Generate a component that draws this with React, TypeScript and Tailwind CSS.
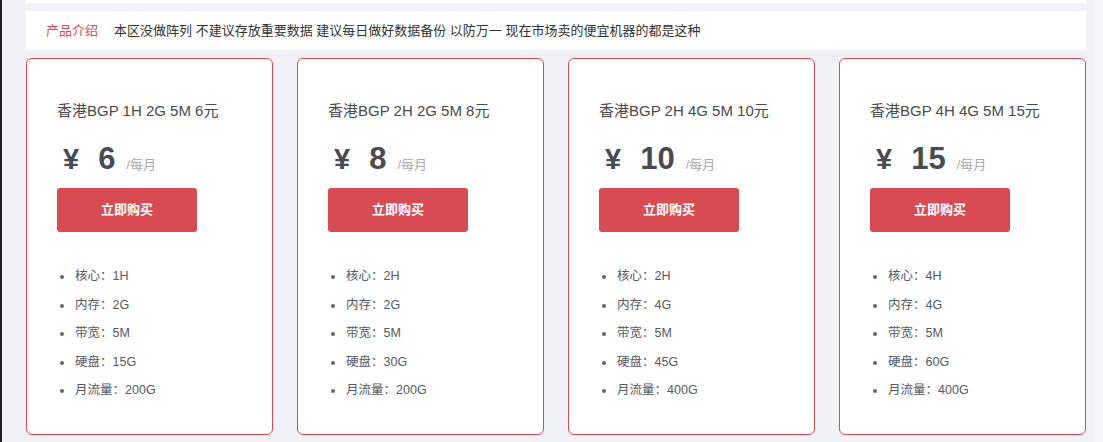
import React from 'react';

interface Plan {
  title: string;
  price: string;
  cpu: string;
  mem: string;
  bw: string;
  disk: string;
  traffic: string;
}

const plans: Plan[] = [
  { title: '香港BGP 1H 2G 5M 6元', price: '6', cpu: '1H', mem: '2G', bw: '5M', disk: '15G', traffic: '200G' },
  { title: '香港BGP 2H 2G 5M 8元', price: '8', cpu: '2H', mem: '2G', bw: '5M', disk: '30G', traffic: '200G' },
  { title: '香港BGP 2H 4G 5M 10元', price: '10', cpu: '2H', mem: '4G', bw: '5M', disk: '45G', traffic: '400G' },
  { title: '香港BGP 4H 4G 5M 15元', price: '15', cpu: '4H', mem: '4G', bw: '5M', disk: '60G', traffic: '400G' },
];

const font = { fontFamily: '"Liberation Sans", "Noto Sans CJK SC", sans-serif' };

const PlanCard: React.FC<{ plan: Plan }> = ({ plan }) => {
  const specs = [
    ['核心', plan.cpu],
    ['内存', plan.mem],
    ['带宽', plan.bw],
    ['硬盘', plan.disk],
    ['月流量', plan.traffic],
  ];

  return (
    <div className="w-[247px] h-[377px] bg-white border border-[#e0474f] rounded-[6px] pl-[30px] pt-[41px]">
      {/* 标题 */}
      <div className="text-[15px] leading-[22px] text-[#4a4a4a]">{plan.title}</div>

      {/* 价格 */}
      <div className="flex items-end mt-[19px] h-[36px] pl-[6px]">
        <span className="text-[29px] leading-[36px] font-bold text-[#474b52]">¥</span>
        <span className="text-[31px] leading-[36px] font-bold text-[#474b52] ml-[19px]">{plan.price}</span>
        <span className="text-[13px] leading-[20px] text-[#aaaaaa] ml-[11px] mb-[2px]">/每月</span>
      </div>

      <button className="mt-[11px] w-[140px] h-[44px] bg-[#d94b53] rounded-[3px] text-white text-[13px] font-bold">
        立即购买
      </button>

      {/* 配置列表 */}
      <ul className="mt-[30px] list-disc pl-[17px] text-[12.5px] text-[#555a60] marker:text-[#666]">
        {specs.map(([k, v]) => (
          <li key={k} className="h-[28.6px] leading-[28.6px] pl-[1px]">
            {k}：{v}
          </li>
        ))}
      </ul>
    </div>
  );
};

export default function App() {
  return (
    <div className="w-[1103px] h-[442px] flex bg-[#f6f6fa] overflow-hidden" style={font}>
      <div className="w-[2px] bg-[#1f1f2b]" />
      <div className="w-[1091px] bg-[#f0f2f7] pl-[24px] pr-[6px]">
        <div className="h-[3px] bg-white w-[1060px]" />
        <div className="mt-[8px] h-[39px] bg-white w-[1060px] flex items-center pl-[20px] text-[13px]">
          <span className="text-[#e0474f]">产品介绍</span>
          <span className="ml-[16px] text-[#333]">
            本区没做阵列 不建议存放重要数据 建议每日做好数据备份 以防万一 现在市场卖的便宜机器的都是这种
          </span>
        </div>
        <div className="mt-[8px] flex gap-[24px]">
          {plans.map(p => (
            <PlanCard key={p.title} plan={p} />
          ))}
        </div>
      </div>
    </div>
  );
}
